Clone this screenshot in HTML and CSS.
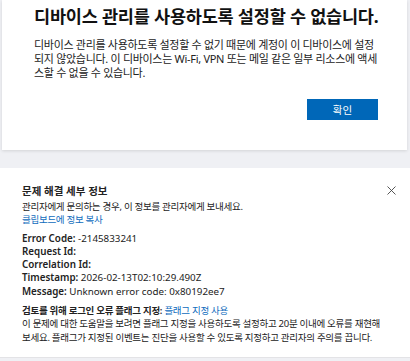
FILE: index.html
```html
<!DOCTYPE html>
<html lang="ko">
<head>
    <meta charset="UTF-8">
    <title>디바이스 관리</title>
    <link rel="stylesheet" href="styles.css">
</head>
<body>

    <!-- Error dialog -->
    <div class="dialog">
        <h1>디바이스 관리를 사용하도록 설정할 수 없습니다.</h1>
        <p class="dialog-text">디바이스 관리를 사용하도록 설정할 수 없기 때문에 계정이 이 디바이스에 설정되지 않았습니다. 이 디바이스는 Wi-Fi, VPN 또는 메일 같은 일부 리소스에 액세스할 수 없을 수 있습니다.</p>
        <div class="dialog-actions">
            <button class="ok-btn">확인</button>
        </div>
    </div>

    <!-- Troubleshooting details -->
    <div class="details">
        <div class="details-head">
            <h2>문제 해결 세부 정보</h2>
            <button class="close-btn" aria-label="닫기">
                <svg width="9" height="9" viewBox="0 0 9 9"><path d="M0.5 0.5 L8.5 8.5 M8.5 0.5 L0.5 8.5" stroke="#444" stroke-width="0.9"/></svg>
            </button>
        </div>
        <p class="ko">관리자에게 문의하는 경우, 이 정보를 관리자에게 보내세요.</p>
        <p class="ko"><a class="link" href="#">클립보드에 정보 복사</a></p>

        <ul class="info">
            <li><b>Error Code:</b> -2145833241</li>
            <li><b>Request Id:</b></li>
            <li><b>Correlation Id:</b></li>
            <li><b>Timestamp:</b> 2026-02-13T02:10:29.490Z</li>
            <li><b>Message:</b> Unknown error code: 0x80192ee7</li>
        </ul>

        <p class="ko"><b>검토를 위해 로그인 오류 플래그 지정:</b> <a class="link" href="#">플래그 지정 사용</a></p>
        <p class="ko">이 문제에 대한 도움말을 보려면 플래그 지정을 사용하도록 설정하고 20분 이내에 오류를 재현해 보세요. 플래그가 지정된 이벤트는 진단을 사용할 수 있도록 지정하고 관리자의 주의를 끕니다.</p>
    </div>

</body>
</html>
```

FILE: styles.css
```css
/* General Styles */
* {
    margin: 0;
    padding: 0;
    box-sizing: border-box;
    font-family: "Noto Sans", "Noto Sans CJK KR", sans-serif;
}

body {
    background-color: #eff0f4;
    color: #1b1b1b;
    overflow: hidden;
}

/* Dialog card */
.dialog {
    margin: 0 3px 0 2px;
    height: 150px;
    background: #fff;
    padding: 5px 29px 0 32px;
    box-shadow: 0 1px 3px rgba(0, 0, 0, 0.12);
}

.dialog h1 {
    font-size: 17.5px;
    font-weight: 700;
    line-height: 23px;
    letter-spacing: -0.2px;
    white-space: nowrap;
    color: #111;
}

.dialog-text {
    margin-top: 10px;
    font-size: 11px;
    line-height: 14px;
    letter-spacing: -0.3px;
    color: #222;
}

.dialog-actions {
    display: flex;
    justify-content: flex-end;
    margin-top: 19px;
}

.ok-btn {
    width: 71px;
    height: 21px;
    border: none;
    background: #0067b8;
    color: #fff;
    font-size: 10.5px;
}

/* Details panel */
.details {
    margin-top: 18px;
    background: #fff;
    padding: 13px 22px 0 22px;
    height: 190px;
    border-bottom: 1px solid #e3e3e6;
    font-size: 9.8px;
    line-height: 13.3px;
    color: #222;
}

.details-head {
    display: flex;
    justify-content: space-between;
    align-items: center;
    height: 19px;
}

.details h2 {
    font-size: 10.5px;
    font-weight: 700;
    line-height: 16px;
}

.close-btn {
    display: flex;
    background: none;
    border: none;
    margin-right: -8px;
}

.ko {
    font-size: 9.5px;
    letter-spacing: -0.28px;
}

.details b {
    font-weight: 600;
}

.link {
    color: #0f6cbd;
    text-decoration: none;
}

.info {
    list-style: none;
    margin: 5px 0 6px;
}
```
